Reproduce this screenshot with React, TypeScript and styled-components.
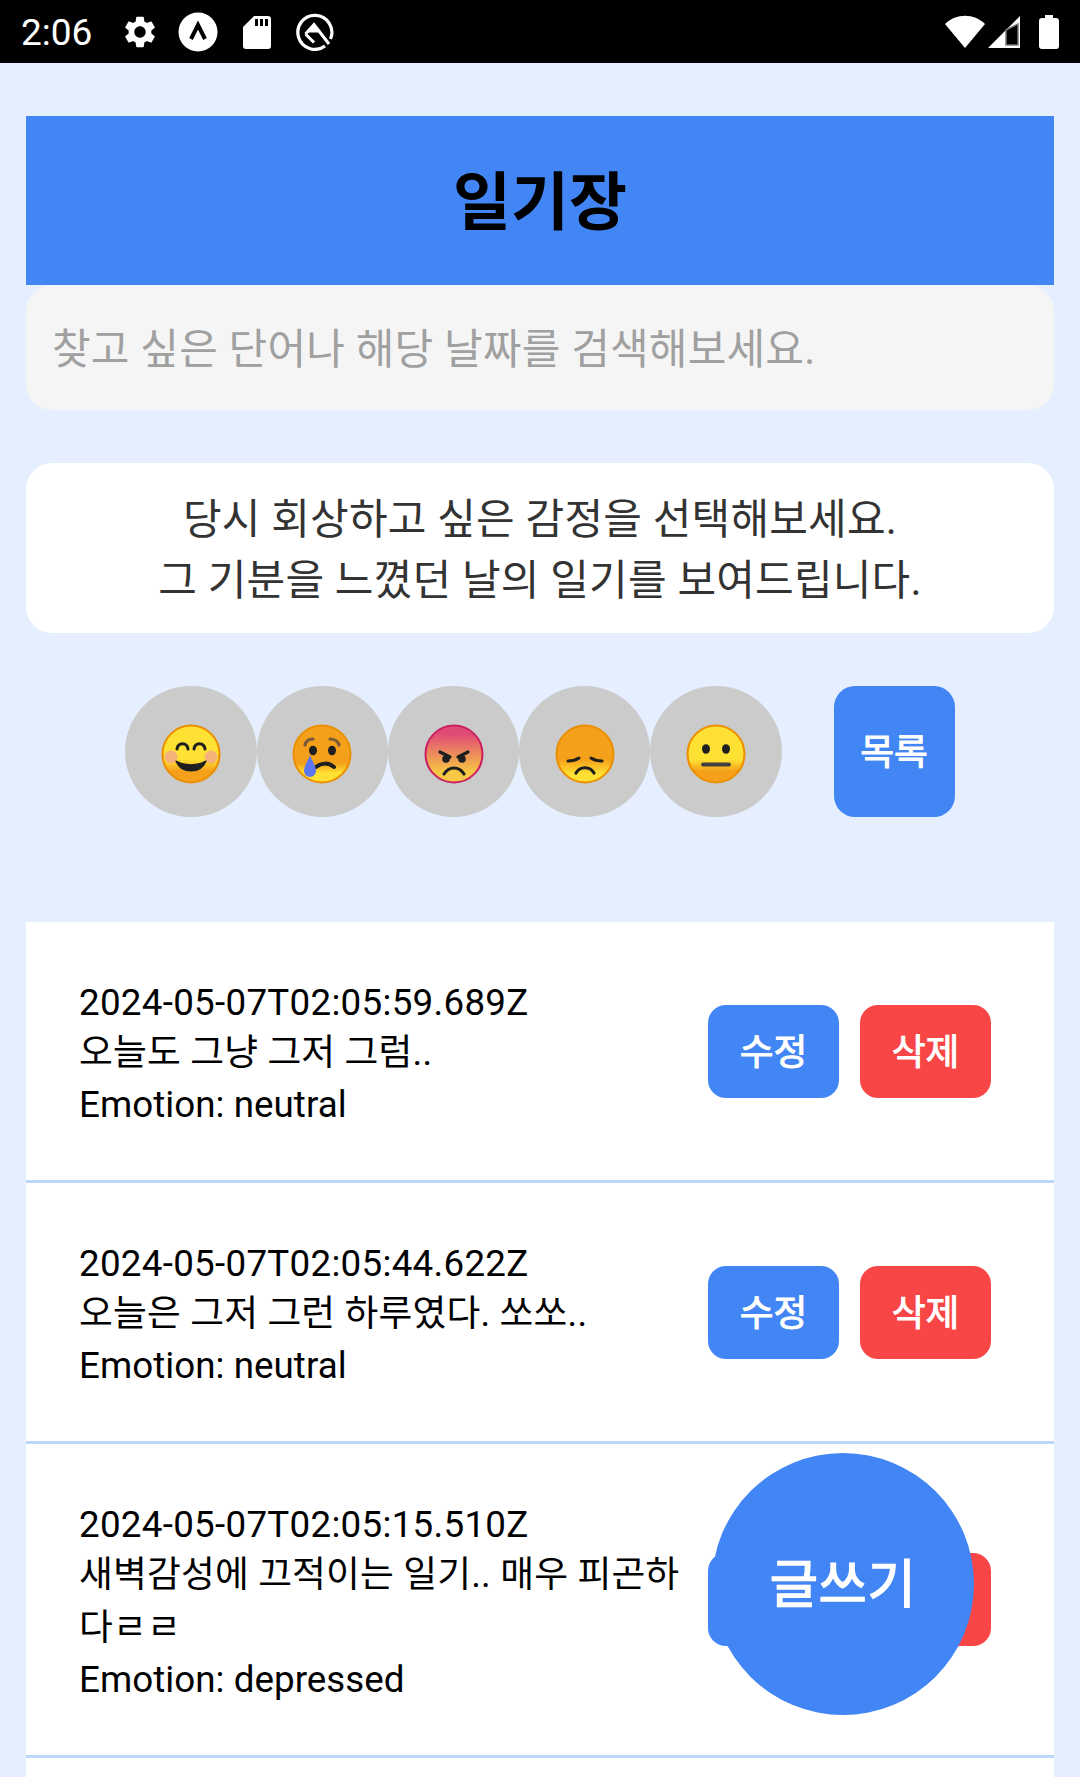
import styled, { createGlobalStyle } from "styled-components";
import { MdSettings } from "react-icons/md";

const GlobalStyle = createGlobalStyle`
  * {
    box-sizing: border-box;
  }
  html,
  body {
    margin: 0;
    padding: 0;
    background-color: #e5efff;
    font-family: Roboto, "Noto Sans CJK KR", sans-serif;
  }
`;

const Screen = styled.div`
  position: relative;
  width: 1080px;
  height: 1777px;
  overflow: hidden;
  background-color: #e5efff;
`;

const StatusBar = styled.div`
  height: 63px;
  padding: 0 21px 0 21px;
  display: flex;
  align-items: center;
  background-color: #000;
  color: #fff;
`;

const Time = styled.span`
  width: 100px;
  padding-top: 2px;
  font-size: 37px;
  line-height: 61px;
`;

const StatusIcons = styled.div`
  display: flex;
  align-items: center;
  gap: 25px;
`;

const Gear = styled(MdSettings)`
  margin-right: -6px;
`;

const StatusRight = styled.div`
  margin-left: auto;
  display: flex;
  align-items: center;
  gap: 3px;
`;

const BatteryIcon = styled.svg`
  margin-left: 15px;
`;

const Main = styled.main`
  padding: 53px 26px 0;
`;

const Header = styled.header`
  height: 169px;
  padding-bottom: 9px;
  display: flex;
  align-items: center;
  justify-content: center;
  background-color: #4285f4;
`;

const Title = styled.h1`
  margin: 0;
  font-size: 63px;
  font-weight: 700;
  color: #000;
`;

const Search = styled.input`
  display: block;
  width: 100%;
  height: 125px;
  padding: 3px 26px 0;
  border: none;
  border-radius: 26px;
  background-color: #f5f5f5;
  font-family: inherit;
  font-size: 42px;
  letter-spacing: 0.2px;
  color: #222;
  &::placeholder {
    color: #a0a0a0;
    opacity: 1;
  }
`;

const Guide = styled.p`
  margin: 53px 0 0;
  height: 170px;
  padding: 26px 0 0;
  border-radius: 26px;
  background-color: #fff;
  text-align: center;
  font-size: 42px;
  letter-spacing: 0.2px;
  line-height: 61px;
  color: #333;
`;

const EmotionRow = styled.div`
  margin-top: 53px;
  display: flex;
  justify-content: center;
`;

const EmotionButton = styled.button`
  width: 131.25px;
  height: 131px;
  padding: 5px 0 0;
  border: none;
  border-radius: 50%;
  background-color: #cbcbcb;
  display: flex;
  align-items: center;
  justify-content: center;
`;

const ListButton = styled.button`
  width: 121px;
  height: 131px;
  margin-left: 52px;
  padding: 0 0 5px;
  border: none;
  border-radius: 21px;
  background-color: #4285f4;
  font-family: inherit;
  font-size: 36.75px;
  -webkit-text-stroke: 1px #fff;
  color: #fff;
`;

const DiaryList = styled.ul`
  margin: 105px 0 0;
  padding: 0;
  list-style: none;
  background-color: #fff;
`;

const DiaryItem = styled.li`
  padding: 50px 63px 50px 53px;
  border-bottom: 3px solid #bcd6fd;
  display: flex;
  align-items: center;
`;

const DiaryText = styled.div`
  flex: 1;
  min-width: 0;
  padding: 8px 20px 0 0;
  font-size: 36.75px;
  color: #000;
`;

const DiaryDate = styled.div`
  line-height: 46px;
  letter-spacing: 0.28px;
`;

const DiaryBody = styled.div`
  line-height: 53px;
  letter-spacing: 0.16px;
  word-break: break-all;
`;

const DiaryEmotion = styled.div`
  line-height: 51px;
  letter-spacing: 0.04px;
`;

const Actions = styled.div`
  flex: none;
  display: flex;
  gap: 21px;
`;

const ActionButton = styled.button<{ $danger?: boolean }>`
  width: 131px;
  height: 93px;
  padding: 0 0 4px;
  border: none;
  border-radius: 18px;
  background-color: ${(props) => (props.$danger ? "#f84545" : "#4285f4")};
  font-family: inherit;
  font-size: 36.75px;
  -webkit-text-stroke: 1px #fff;
  color: #fff;
`;

const WriteButton = styled.button`
  position: absolute;
  right: 106px;
  bottom: 62px;
  width: 262px;
  height: 262px;
  padding: 0 0 9px;
  border: none;
  border-radius: 50%;
  background-color: #4285f4;
  font-family: inherit;
  font-size: 52.5px;
  letter-spacing: 0.5px;
  -webkit-text-stroke: 1.4px #fff;
  color: #fff;
`;

const diaries = [
  {
    id: 1,
    date: "2024-05-07T02:05:59.689Z",
    body: "오늘도 그냥 그저 그럼..",
    emotion: "neutral",
  },
  {
    id: 2,
    date: "2024-05-07T02:05:44.622Z",
    body: "오늘은 그저 그런 하루였다. 쏘쏘..",
    emotion: "neutral",
  },
  {
    id: 3,
    date: "2024-05-07T02:05:15.510Z",
    body: "새벽감성에 끄적이는 일기.. 매우 피곤하다ㄹㄹ",
    emotion: "depressed",
  },
];

function FaceBase({
  id,
  top,
  bottom,
  stop,
  end,
  rim,
  children,
}: {
  id: string;
  top: string;
  bottom: string;
  stop: string;
  end: string;
  rim: string;
  children: React.ReactNode;
}) {
  return (
    <svg width="60" height="60" viewBox="0 0 60 60">
      <defs>
        <linearGradient id={id} x1="0" y1="0" x2="0" y2="1">
          <stop offset={stop} stopColor={top} />
          <stop offset={end} stopColor={bottom} />
        </linearGradient>
      </defs>
      <circle cx="30" cy="30" r="28.5" fill={`url(#${id})`} stroke={rim} strokeWidth="2" />
      {children}
    </svg>
  );
}

function Happy() {
  return (
    <FaceBase id="happy" top="#fee133" bottom="#f5a01a" stop="0.6" end="0.8" rim="#eb8f00">
      <circle cx="10" cy="33" r="6.5" fill="#f4a68c" opacity="0.8" />
      <circle cx="50" cy="33" r="6.5" fill="#f4a68c" opacity="0.8" />
      <path d="M16 25c1-7 10-7 11 0M33 25c1-7 10-7 11 0" fill="none" stroke="#1f1f1f" strokeWidth="3" strokeLinecap="round" />
      <path d="M15 37c8 5 22 5 30 0c-3 8-9 10-15 10s-12-2-15-10z" fill="#1f1f1f" stroke="#1f1f1f" strokeWidth="1.2" strokeLinejoin="round" />
    </FaceBase>
  );
}

function Crying() {
  return (
    <FaceBase id="crying" top="#f5a01a" bottom="#fee133" stop="0.66" end="0.84" rim="#eb8f00">
      <path d="M13 21c1-4 4-6 8-6M38 15c4 0 8 2 9 6" fill="none" stroke="#7a5a3a" strokeWidth="3.2" strokeLinecap="round" />
      <ellipse cx="21" cy="26.5" rx="4" ry="4.8" fill="#1f1f1f" />
      <ellipse cx="40" cy="26.5" rx="4" ry="4.8" fill="#1f1f1f" />
      <path d="M24 43c5-4 12-5 18 0" fill="none" stroke="#1f1f1f" strokeWidth="4" strokeLinecap="round" />
      <path d="M18 31c2 6 6 11 6 16a6 6 0 0 1-12 0c0-5 4-10 6-16z" fill="#5b76f0" />
    </FaceBase>
  );
}

function Angry() {
  return (
    <FaceBase id="angry" top="#e04b76" bottom="#f8c744" stop="0.15" end="0.82" rim="#cb1f63">
      <path d="M16 28l10 5M44 28l-10 5" fill="none" stroke="#1f1f1f" strokeWidth="3.2" strokeLinecap="round" />
      <circle cx="22" cy="35" r="3.8" fill="#1f1f1f" />
      <circle cx="38" cy="35" r="3.8" fill="#1f1f1f" />
      <path d="M20 50c5-8 15-8 20 0" fill="none" stroke="#1f1f1f" strokeWidth="3.2" strokeLinecap="round" />
    </FaceBase>
  );
}

function Sad() {
  return (
    <FaceBase id="sad" top="#f5a01a" bottom="#fee133" stop="0.6" end="0.85" rim="#eb8f00">
      <path d="M13 37c4 0 8-1 11-3M47 37c-4 0-8-1-11-3" fill="none" stroke="#1f1f1f" strokeWidth="3" strokeLinecap="round" />
      <path d="M21 49c4-7 14-7 18 0" fill="none" stroke="#1f1f1f" strokeWidth="3.2" strokeLinecap="round" />
    </FaceBase>
  );
}

function Neutral() {
  return (
    <FaceBase id="neutral" top="#fee133" bottom="#f5a01a" stop="0.6" end="0.8" rim="#eb8f00">
      <ellipse cx="20" cy="25" rx="4" ry="4.8" fill="#1f1f1f" />
      <ellipse cx="40" cy="25" rx="4" ry="4.8" fill="#1f1f1f" />
      <rect x="15" y="38.5" width="30" height="4" rx="2" fill="#404040" />
    </FaceBase>
  );
}

function App() {
  return (
    <Screen>
      <GlobalStyle />
      <StatusBar>
        <Time>2:06</Time>
        <StatusIcons>
          <Gear size={38} />
          <svg width="40" height="40" viewBox="0 0 40 40">
            <circle cx="20" cy="20" r="19.5" fill="#fff" />
            <path d="M13 27l7-14l7 14" fill="none" stroke="#000" strokeWidth="4" />
          </svg>
          <svg width="28" height="34" viewBox="0 0 28 34">
            <path
              fillRule="evenodd"
              d="M11 1h14a3 3 0 0 1 3 3v27a3 3 0 0 1-3 3H3a3 3 0 0 1-3-3V12zM12 4v7h3V4zM17 4v7h3V4zM22 4v7h3V4z"
              fill="#fff"
            />
          </svg>
          <svg width="38" height="38" viewBox="0 0 38 38">
            <path d="M29 33A17 17 0 1 1 34.5 26" fill="none" stroke="#fff" strokeWidth="3.2" />
            <path d="M12 19.5L18 13L24 19.5z" fill="#fff" />
            <path d="M9.5 21L18 11.5L33 31M9.5 21L18 29.5" fill="none" stroke="#fff" strokeWidth="3" />
          </svg>
        </StatusIcons>
        <StatusRight>
          <svg width="40" height="34" viewBox="0 0 40 34">
            <path d="M0 9C11-2 29-2 40 9L20 33z" fill="#fff" />
          </svg>
          <svg width="33" height="34" viewBox="0 0 33 34">
            <path fillRule="evenodd" d="M32 1v32H0zM18 15v15h12V9z" fill="#fff" />
            <path d="M18 15v15h12V9z" fill="#000" stroke="#777" strokeWidth="1.5" />
          </svg>
          <BatteryIcon width="20" height="34" viewBox="0 0 20 34">
            <path d="M6 0h8v3h3a3 3 0 0 1 3 3v25a3 3 0 0 1-3 3H3a3 3 0 0 1-3-3V6a3 3 0 0 1 3-3h3z" fill="#fff" />
          </BatteryIcon>
        </StatusRight>
      </StatusBar>
      <Main>
        <Header>
          <Title>일기장</Title>
        </Header>
        <Search placeholder="찾고 싶은 단어나 해당 날짜를 검색해보세요." />
        <Guide>
          당시 회상하고 싶은 감정을 선택해보세요.
          <br />그 기분을 느꼈던 날의 일기를 보여드립니다.
        </Guide>
        <EmotionRow>
          <EmotionButton><Happy /></EmotionButton>
          <EmotionButton><Crying /></EmotionButton>
          <EmotionButton><Angry /></EmotionButton>
          <EmotionButton><Sad /></EmotionButton>
          <EmotionButton><Neutral /></EmotionButton>
          <ListButton>목록</ListButton>
        </EmotionRow>
        <DiaryList>
          {diaries.map((diary) => (
            <DiaryItem key={diary.id}>
              <DiaryText>
                <DiaryDate>{diary.date}</DiaryDate>
                <DiaryBody>{diary.body}</DiaryBody>
                <DiaryEmotion>Emotion: {diary.emotion}</DiaryEmotion>
              </DiaryText>
              <Actions>
                <ActionButton>수정</ActionButton>
                <ActionButton $danger>삭제</ActionButton>
              </Actions>
            </DiaryItem>
          ))}
          <DiaryItem />
        </DiaryList>
      </Main>
      <WriteButton>글쓰기</WriteButton>
    </Screen>
  );
}

export default App;
